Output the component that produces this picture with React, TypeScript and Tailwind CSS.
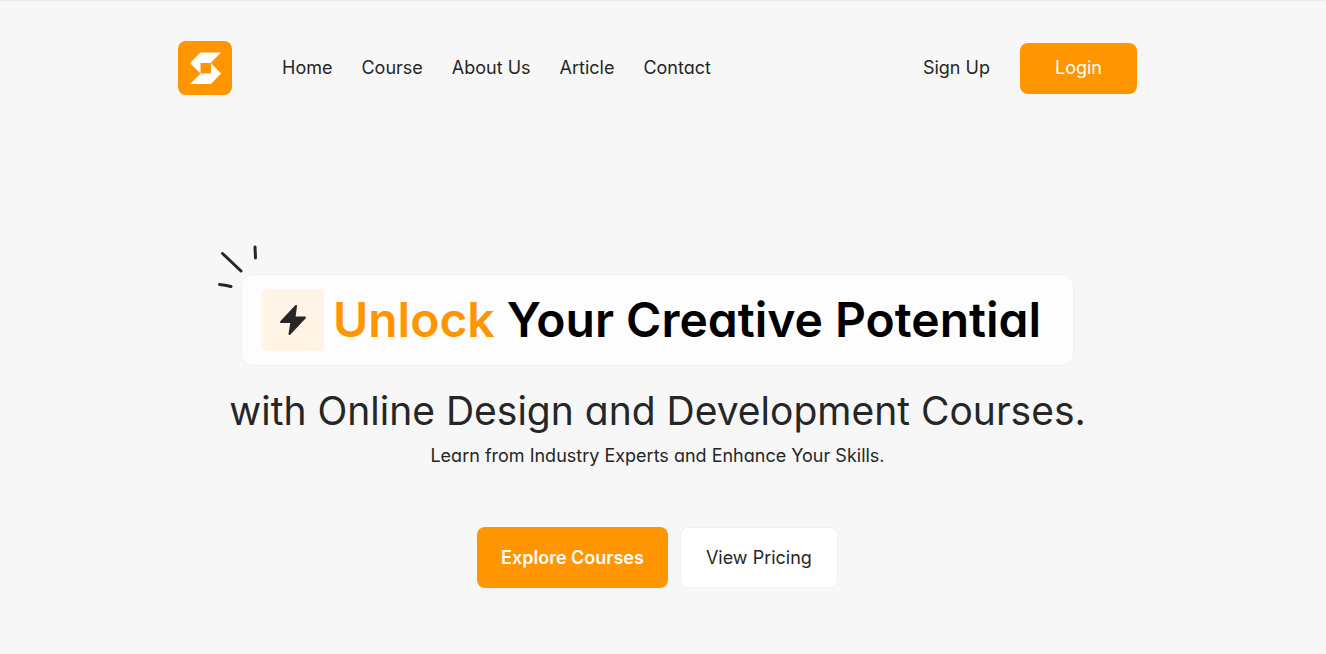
const navLinks = ["Home", "Course", "About Us", "Article", "Contact"];

function Logo() {
  return (
    <a href="#home" aria-label="Home page" className="block shrink-0">
      <svg viewBox="0 0 54 54" className="size-[54px]" aria-hidden="true">
        <rect width="54" height="54" rx="8" fill="#ff9500" />
        <path
          fill="#fff"
          d="M22.500 11.500H43L33 21.500V22L43 32.500 33 43H12L22.500 32.500 12 22Z"
        />
        <path fill="#ff9500" d="M22.500 22h10.500v10.500H22.500z" />
      </svg>
    </a>
  );
}

function Header() {
  return (
    <header className="flex items-center justify-between">
      <div className="flex items-center gap-[50px]">
        <Logo />
        <nav className="flex gap-[29px]">
          {navLinks.map((label) => (
            <a key={label} href="#" className="text-lg whitespace-nowrap">
              {label}
            </a>
          ))}
        </nav>
      </div>
      <div className="flex items-center gap-[30px]">
        <a href="#signup" className="text-lg whitespace-nowrap">
          Sign Up
        </a>
        <button
          type="button"
          className="h-[51px] rounded-lg bg-[#ff9500] px-[35px] text-lg text-white"
        >
          Login
        </button>
      </div>
    </header>
  );
}

function Sparks() {
  return (
    <svg
      viewBox="0 0 42 46"
      className="absolute -top-[32px] -left-[26px] h-[46px] w-[42px]"
      fill="none"
      stroke="#262626"
      strokeWidth="3"
      strokeLinecap="round"
      aria-hidden="true"
    >
      <path d="M6.500 10.500 25 28M39 4l.5 11M3.500 41.500Q9 41.800 15 43.500" />
    </svg>
  );
}

function Hero() {
  return (
    <main className="mt-[179px] flex flex-col items-center text-center">
      <div className="relative flex items-center gap-[9px] rounded-xl border border-[#f1f1f1] bg-[#fdfdfd] py-[14px] pr-8 pl-5">
        <Sparks />
        <div className="flex size-[62px] shrink-0 items-center justify-center rounded-md bg-[#fff4e5]">
          <svg viewBox="0 0 28 32" className="h-8 w-7" fill="#262626" aria-hidden="true">
            <path
              stroke="#262626"
              strokeWidth="2"
              strokeLinejoin="round"
              d="M17 2 2 18H12.500L10.500 30 26 13.500H15.500Z"
            />
          </svg>
        </div>
        <h1 className="text-5xl font-semibold whitespace-nowrap text-black">
          <span className="text-[#ff9500]">Unlock</span> Your Creative Potential
        </h1>
      </div>
      <h2 className="mt-5 text-[39px] leading-[50px] whitespace-nowrap">
        with Online Design and Development Courses.
      </h2>
      <p className="mt-1.5 text-lg">Learn from Industry Experts and Enhance Your Skills.</p>
      <div className="mt-[57px] flex gap-3">
        <button
          type="button"
          className="h-[61px] rounded-lg bg-[#ff9500] px-6 text-lg font-semibold text-white"
        >
          Explore Courses
        </button>
        <button
          type="button"
          className="h-[61px] rounded-lg border border-[#f1f1f1] bg-white px-[25px] text-lg"
        >
          View Pricing
        </button>
      </div>
    </main>
  );
}

export default function App() {
  return (
    <div className="min-h-screen border-t border-[#ebebeb] bg-[#f7f7f7] pt-10 pr-[11px] font-['Inter','Liberation_Sans',sans-serif] text-[#262626] [font-feature-settings:'cv11']">
      <div className="mx-auto max-w-[959px]">
        <Header />
        <Hero />
      </div>
    </div>
  );
}
